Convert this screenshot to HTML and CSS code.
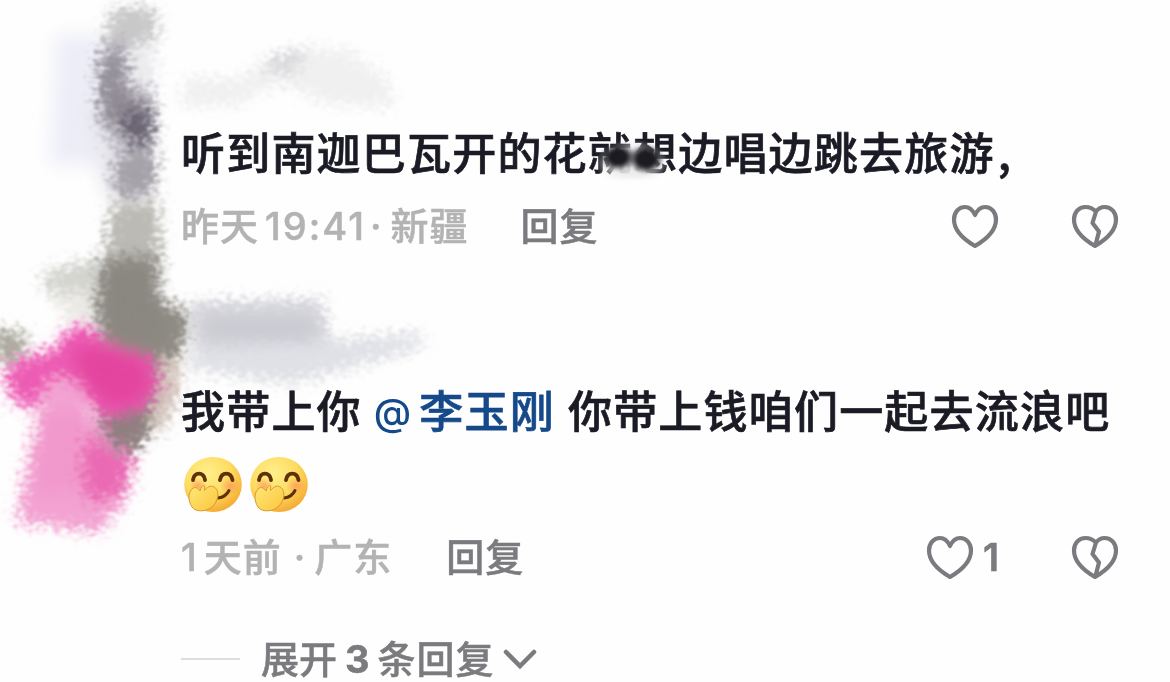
FILE: index.html
```html
<!DOCTYPE html>
<html lang="zh-CN">
<head>
    <meta charset="UTF-8">
    <meta name="viewport" content="width=device-width, initial-scale=1.0">
    <title>评论</title>
    <link rel="stylesheet" href="styles.css">
</head>
<body>
    <!-- Shared icons -->
    <svg class="defs" width="0" height="0">
        <defs>
            <radialGradient id="face" cx="40%" cy="30%" r="75%">
                <stop offset="0" stop-color="#fff08c"/>
                <stop offset="0.55" stop-color="#fddc61"/>
                <stop offset="1" stop-color="#f5a52e"/>
            </radialGradient>
            <linearGradient id="hand" x1="0" y1="0" x2="1" y2="1">
                <stop offset="0" stop-color="#ffe779"/>
                <stop offset="1" stop-color="#fbc63c"/>
            </linearGradient>
            <radialGradient id="blush">
                <stop offset="0" stop-color="#fb8a58" stop-opacity="0.65"/>
                <stop offset="1" stop-color="#fb8a58" stop-opacity="0"/>
            </radialGradient>
            <symbol id="heart" viewBox="0 0 48 46">
                <path d="M24 12C21.500 6.500 18 4 14 4C7.500 4 3 9.500 3 16.500C3 27 12 36 24 43C36 36 45 27 45 16.500C45 9.500 40.500 4 34 4C30 4 26.500 6.500 24 12Z"/>
            </symbol>
            <symbol id="broken" viewBox="0 0 48 46">
                <path d="M25 8.500C22 5.500 18.500 4 14.500 4C7.500 4 3 9.500 3 16.500C3 27 12 36 24 43C36 36 45 27 45 16.500C45 9.500 40.500 4 33.500 4C30 4 27 6 25 8.500L21.500 20L28 28.500L24.500 42"/>
            </symbol>
            <symbol id="giggle" viewBox="0 0 60 58">
                <ellipse cx="30" cy="28.500" rx="28.800" ry="27.500" fill="url(#face)"/>
                <ellipse cx="15" cy="30" rx="9" ry="8" fill="url(#blush)"/>
                <ellipse cx="47" cy="30" rx="10" ry="9" fill="url(#blush)"/>
                <path d="M10 24C11 15.500 21 15.500 22 24M37 24C38.500 15.500 48 15.500 49.500 24" fill="none" stroke="#603007" stroke-width="3.900" stroke-linecap="round"/>
                <path d="M35 42Q43 41 46 34.500" fill="none" stroke="#603007" stroke-width="3" stroke-linecap="round"/>
                <path d="M9 51C5 45 5 37 9 33C12 30 15 32 17 35C18 31 20 28.500 21.500 30C22 31 21 33 21.500 34.500C25 30 29 29 32 31.500C37 36 35 45 30 50C25 55.500 13 57 9 51Z" fill="url(#hand)" stroke="#d79a30" stroke-width="1"/>
            </symbol>
        </defs>
    </svg>

    <!-- Brush marks over avatars and user names -->
    <svg class="brush" viewBox="0 0 1170 682">
        <defs>
            <filter id="rough" filterUnits="userSpaceOnUse" x="-30" y="-30" width="520" height="620">
                <feGaussianBlur stdDeviation="6" result="soft"/>
                <feTurbulence type="fractalNoise" baseFrequency="0.15 0.24" numOctaves="3" seed="8"/>
                <feDisplacementMap in="soft" scale="34" xChannelSelector="R" yChannelSelector="G"/>
                <feGaussianBlur stdDeviation="0.800"/>
            </filter>
            <filter id="soft" filterUnits="userSpaceOnUse" x="-30" y="-30" width="520" height="620">
                <feGaussianBlur stdDeviation="9"/>
            </filter>
        </defs>
        <path d="M56 35H103V165H50Z" fill="#ededf8" filter="url(#soft)"/>
        <path d="M88 105L150 110L145 196H105Z" fill="#e5e4eb" filter="url(#soft)"/>
        <g filter="url(#rough)">
            <path d="M112 8L152 6L160 33L137 49L105 46Z" fill="#c8c8c8"/>
            <path d="M104 38L127 38L131 78L153 94L154 190L121 202L110 175L123 156L101 126L96 78Z" fill="#b9b6be"/>
            <path d="M133 45H156V92L134 82Z" fill="#ececef"/>
        </g>
        <g filter="url(#rough)">
            <path d="M107 50L122 56L121 88L148 104L150 134L137 153L126 132L105 120L102 85Z" fill="#908b95"/>
            <path d="M122 112L153 108L149 139L139 153L126 132Z" fill="#66616f"/>
            <path d="M117 160L153 152L153 188L122 197Z" fill="#a5a1a9"/>
            <path d="M110 206L158 200L161 268L103 274Z" fill="#bbbab4"/>
            <path d="M41 273L96 258L102 288L50 299Z" fill="#d3d4cf"/>
            <path d="M50 292H95V322H68Z" fill="#ebeae6"/>
            <path d="M-6 330L26 333L23 363H-6Z" fill="#aaa99d"/>
        </g>
        <g filter="url(#rough)">
            <path d="M102 262L157 256L159 300L192 313L182 355L164 376L153 428L128 455L96 430L104 350L94 305Z" fill="#8f8c84"/>
            <path d="M159 360L181 355L180 395L163 432L149 425Z" fill="#d6c7bf"/>
        </g>
        <g filter="url(#rough)">
            <path d="M6 364L58 347L63 331L90 325L114 347L152 356L158 386L135 417L101 422L86 392L48 388L31 412L8 396Z" fill="#ed5bb4"/>
            <path d="M49 378L81 378L91 417L118 452L134 456L128 496L99 533L16 522L27 465L37 425Z" fill="#f3a3d2"/>
            <path d="M86 430L110 450L134 454L126 492L90 504L78 472Z" fill="#ea6ab4"/>
            <path d="M103 418L146 406L142 440L124 454L104 438Z" fill="#927f82"/>
        </g>
        <g filter="url(#rough)">
            <path d="M185 78L239 79L279 51L345 48L389 80L395 107L330 105L280 83L235 106H180Z" fill="#f0f0f1"/>
            <path d="M260 67L285 53L311 49L289 74Z" fill="#d4d4d7"/>
            <path d="M190 302L322 299L330 343L195 353Z" fill="#d6d6dc"/>
            <path d="M192 347L353 338L425 333L420 348L389 358L290 384L188 369Z" fill="#e0e1e6"/>
        </g>
        <g filter="url(#soft)">
            <path d="M107 264H150L154 309L168 322L157 350L109 340Z" fill="#8a8780"/>
            <path d="M72 347L103 345L147 359L151 393L125 409L101 402L79 377Z" fill="#e3459f"/>
            <path d="M42 412H83L85 489L35 495Z" fill="#f08dc6" opacity="0.500"/>
            <path d="M202 318H315V338H205Z" fill="#c7c8cf"/>
        </g>
    </svg>

    <main class="comments">
        <article class="comment">
            <p class="text">听到南迦巴瓦开的花<span class="smudged">就想</span>边唱边跳去旅游<span class="comma">,</span></p>
            <div class="meta">
                <span class="date">昨天</span>
                <span class="time">19:41</span>
                <span class="dot">·</span>
                <span class="place">新疆</span>
                <span class="reply">回复</span>
                <div class="actions">
                    <svg class="icon"><use href="#heart"/></svg>
                    <svg class="icon"><use href="#broken"/></svg>
                </div>
            </div>
        </article>

        <article class="comment second">
            <p class="text">我带上你<span class="mention"><span class="at">@</span>李玉刚</span>你带上钱咱们一起去流浪吧</p>
            <div class="emojis">
                <svg><use href="#giggle"/></svg>
                <svg><use href="#giggle"/></svg>
            </div>
            <div class="meta">
                <span class="date"><span class="num">1</span>天前</span>
                <span class="dot wide">·</span>
                <span class="place">广东</span>
                <span class="reply far">回复</span>
                <div class="actions">
                    <svg class="icon"><use href="#heart"/></svg>
                    <span class="count">1</span>
                    <svg class="icon"><use href="#broken"/></svg>
                </div>
            </div>
        </article>

        <div class="expand">
            <span class="line"></span>
            <span>展开</span><b>3</b><span class="rest">条回复</span>
            <svg class="chevron" viewBox="0 0 34 22"><path d="M3 4L17 18L31 4"/></svg>
        </div>
    </main>
</body>
</html>
```
FILE: styles.css
```css
* {
    box-sizing: border-box;
}
body {
    margin: 0;
    width: 1170px;
    height: 682px;
    overflow: hidden;
    position: relative;
    background: #fefefe;
    font-family: Inter, "Noto Sans CJK SC", sans-serif;
    color: #1b1b25;
}
.defs {
    position: absolute;
}
.brush {
    position: absolute;
    left: 0;
    top: 0;
    width: 1170px;
    height: 682px;
}
.comments {
    position: relative;
    padding: 119px 51px 0 181px;
}
.text {
    margin: 0;
    height: 64px;
    line-height: 64px;
    font-family: "Noto Sans CJK SC", sans-serif;
    font-size: 44px;
    font-weight: 500;
    letter-spacing: 1.2px;
    white-space: nowrap;
    -webkit-text-stroke: 0.7px currentColor;
}
.comma {
    margin-left: 3px;
}
.smudged {
    position: relative;
}
.smudged::after {
    content: "";
    position: absolute;
    left: 6px;
    top: 20px;
    width: 76px;
    height: 40px;
    background:
        radial-gradient(ellipse 18px 14px at 24px 18px, #1b1b20 50%, transparent 100%),
        radial-gradient(ellipse 18px 15px at 52px 20px, #1b1b20 50%, transparent 100%),
        radial-gradient(ellipse at 50% 60%, rgba(235, 235, 235, 0.9) 35%, transparent 68%);
    filter: blur(1.5px);
}
.meta {
    display: flex;
    align-items: center;
    height: 64px;
    margin-top: 11px;
    font-size: 38px;
    font-weight: 500;
    letter-spacing: 1px;
    line-height: 64px;
    color: #b3b3b3;
    white-space: nowrap;
    -webkit-text-stroke: 0.5px currentColor;
}
.time {
    margin-left: 6px;
    width: 101px;
    letter-spacing: 2px;
}
.dot {
    width: 20.5px;
    margin-left: 4px;
}
.dot.wide {
    margin: 0 0 0 12px;
}
.reply {
    margin-left: 52px;
    color: #7b7b7f;
}
.reply.far {
    margin-left: 54px;
}
.actions {
    display: flex;
    align-items: center;
    margin-left: auto;
    color: #7b7b7f;
}
.icon {
    width: 48px;
    height: 46px;
    fill: none;
    stroke: #7b7b7f;
    stroke-width: 4.2;
    stroke-linejoin: round;
    stroke-linecap: round;
}
.icon + .icon {
    margin-left: 72px;
}
.num {
    margin-right: 6px;
}
.count {
    width: 97px;
    padding-left: 9px;
    font-weight: 600;
}
.second {
    margin-top: 119px;
}
.mention {
    margin: 0 13px 0 12px;
    color: #15498a;
}
.at {
    position: relative;
    top: -2px;
    font-family: Inter, sans-serif;
    font-size: 38px;
    margin-right: 7px;
    -webkit-text-stroke: 0;
}
.emojis {
    display: flex;
    gap: 6px;
    height: 76px;
    padding: 15px 0 0 2px;
}
.emojis svg {
    width: 60px;
    height: 58px;
}
.second .meta {
    margin-top: 8px;
}
.expand {
    display: flex;
    align-items: center;
    height: 46px;
    margin-top: 47px;
    font-size: 38px;
    font-weight: 500;
    line-height: 46px;
    color: #7b7b7f;
    -webkit-text-stroke: 0.5px currentColor;
}
.expand .line {
    width: 59px;
    height: 2px;
    margin-right: 21px;
    background: #dddddd;
}
.expand b {
    margin: 0 8px;
    font-weight: 700;
}
.rest {
    letter-spacing: 1px;
}
.chevron {
    width: 34px;
    height: 22px;
    margin-left: 8px;
    fill: none;
    stroke: #7b7b7f;
    stroke-width: 4.5;
    stroke-linecap: round;
}
```
